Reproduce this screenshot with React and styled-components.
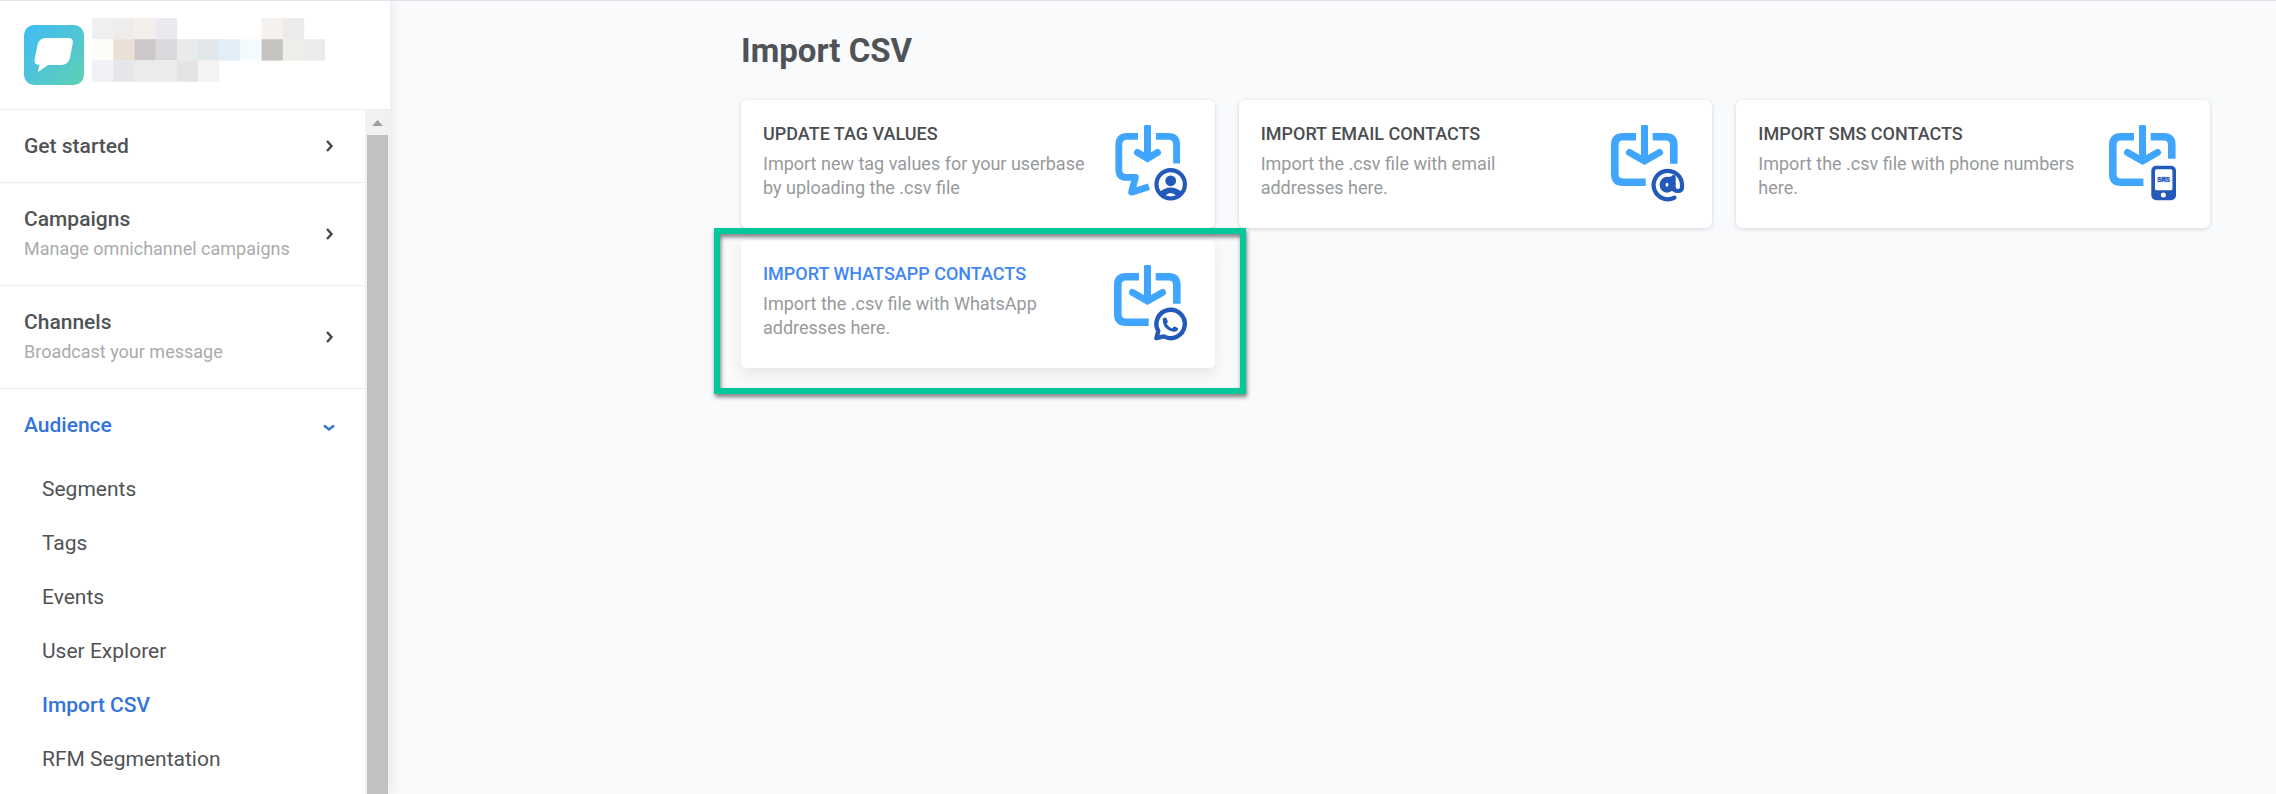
import React from "react"
import styled, { createGlobalStyle, css, ThemeProvider } from "styled-components"

const theme = {
  color: {
    page: "#f8fafc",
    text: "#505356",
    muted: "#a9abad",
    body: "#979a9c",
    active: "#3274db",
    hover: "#4286f5",
    line: "#eceeef",
    icon: "#3fa5ff",
    badge: "#2259ba",
    highlight: "#06c79a"
  }
}

const GlobalStyle = createGlobalStyle`
  *, *::before, *::after {
    box-sizing: border-box;
  }
  body {
    margin: 0;
    background: ${theme.color.page};
    font-family: Roboto, "Liberation Sans", sans-serif;
  }
  a {
    text-decoration: none;
  }
`

const Page = styled.div`
  display: flex;
  height: 100vh;
  overflow: hidden;
  border-top: 1px solid #e0e2e6;
  color: ${props => props.theme.color.text};
`

const Sidebar = styled.aside`
  display: flex;
  flex-direction: column;
  flex: 0 0 390px;
  background: #fff;
  box-shadow: 0 0 10px rgba(60, 70, 90, 0.12);
`

const Brand = styled.header`
  display: flex;
  gap: 8px;
  padding: 17px 24px 24px;
  border-bottom: 1px solid ${props => props.theme.color.line};
`

const Logo = styled.svg`
  width: 60px;
  height: 60px;
  margin-top: 7px;
`

const Mosaic = styled.svg`
  width: 233px;
  height: 64px;
`

const SidebarBody = styled.div`
  display: flex;
  flex: 1;
  min-height: 0;
`

const Nav = styled.nav`
  flex: 1;
  overflow: hidden;
`

const Section = styled.button`
  display: flex;
  align-items: center;
  justify-content: space-between;
  width: 100%;
  padding: 24px 30px 24px 24px;
  border: 0;
  border-bottom: 1px solid
    ${props => (props.$open ? "transparent" : props.theme.color.line)};
  background: none;
  color: ${props => (props.$open ? props.theme.color.active : "inherit")};
  font-family: inherit;
  text-align: left;
  cursor: pointer;
`

const SectionText = styled.span`
  display: flex;
  flex-direction: column;
  gap: 6px;
  line-height: 24px;
`

const SectionTitle = styled.span`
  font-size: 21px;
  font-weight: 500;
`

const SectionNote = styled.span`
  color: ${props => props.theme.color.muted};
  font-size: 18px;
`

const Chevron = styled.svg`
  width: 12px;
  height: 12px;
  fill: none;
  stroke: ${props => (props.$open ? props.theme.color.active : "#45484b")};
  stroke-width: 2.4;
`

const SubList = styled.ul`
  margin: 0;
  padding: 0;
  list-style: none;
`

const SubLink = styled.a`
  display: block;
  padding-left: 42px;
  color: inherit;
  font-size: 21px;
  line-height: 54px;
  ${props =>
    props.$active &&
    css`
      color: ${props.theme.color.active};
      font-weight: 500;
    `};
`

const Scrollbar = styled.div`
  display: flex;
  flex-direction: column;
  flex: 0 0 25px;
  padding: 0 2px;
  background: #f1f1f1;
`

const ScrollArrow = styled.svg`
  width: 21px;
  height: 25px;
  fill: #a0a0a0;
`

const ScrollThumb = styled.div`
  flex: 1;
  background: #c1c1c1;
`

const Main = styled.main`
  flex: 1;
  min-width: 0;
  padding: 26px 66px 48px 351px;
`

const Title = styled.h1`
  margin: 0 0 25px;
  font-size: 33px;
  font-weight: 700;
  line-height: 48px;
`

const Cards = styled.div`
  display: grid;
  grid-template-columns: repeat(3, 1fr);
  gap: 12px 24px;
`

const Card = styled.a`
  position: relative;
  display: flex;
  justify-content: space-between;
  min-height: 128px;
  padding: 22px 26px 22px 22px;
  border-radius: 6px;
  background: #fff;
  box-shadow: ${props =>
    props.$highlighted
      ? "0 6px 14px rgba(60, 60, 60, 0.1)"
      : "0 1px 4px rgba(60, 70, 80, 0.2)"};
  color: inherit;
`

const CardText = styled.div`
  max-width: 322px;
`

const CardTitle = styled.h2`
  margin: 0 0 6px;
  color: ${props => (props.$active ? props.theme.color.hover : "#4b4e51")};
  font-size: 18px;
  font-weight: 500;
  line-height: 24px;
  text-transform: uppercase;
`

const CardNote = styled.p`
  margin: 0;
  color: ${props => props.theme.color.body};
  font-size: 18px;
  line-height: 24px;
`

const CardIcon = styled.svg`
  flex: none;
  width: 75px;
  height: 78px;
  margin-top: 3px;
`

const Highlight = styled.span`
  position: absolute;
  inset: -12px -31px -26px -27px;
  z-index: 1;
  border: 6px solid ${props => props.theme.color.highlight};
  filter: drop-shadow(1px 3px 2px rgba(0, 0, 0, 0.5));
  pointer-events: none;
`

const { icon, badge } = theme.color
const frame = { fill: "none", stroke: icon, strokeWidth: 7.6 }

const Arrow = ({ narrow }) => (
  <g fill="none" stroke={icon} strokeWidth="7" strokeLinecap="round">
    <path d="M33.5 0.5V34" strokeLinecap="butt" />
    <path
      d={
        narrow
          ? "M23.5 27.5L33.5 33.5L43.5 27.5"
          : "M18.5 27.5L33.5 36L48.5 27.5"
      }
    />
    <path d="M32 1.8H35" strokeWidth="3.5" />
  </g>
)

const TagIcon = () => (
  <CardIcon viewBox="0 0 75 78" aria-hidden="true">
    <path
      {...frame}
      strokeWidth="6.8"
      strokeLinejoin="round"
      d="M24 11.4H13Q4.8 11.4 4.8 19.6V44.4Q4.8 52.4 12.6 52.4H21.4L17.6 67.2L35 61.8M42 11.4H54.6Q62.6 11.4 62.6 19.6V38.4"
    />
    <Arrow narrow />
    <circle cx="56.7" cy="59.3" r="14.2" fill="none" stroke={badge} strokeWidth="4.2" />
    <circle cx="56.7" cy="55.8" r="5.4" fill={badge} />
    <path
      d="M45 67.5Q56.7 57.6 68.4 67.5L66 71H62.5Q56.7 65 50.9 71H47.4Z"
      fill={badge}
    />
  </CardIcon>
)

const EmailIcon = () => (
  <CardIcon viewBox="0 0 75 78" aria-hidden="true">
    <path
      {...frame}
      d="M25 11.8H12Q3.8 11.8 3.8 20V49.2Q3.8 57.2 12 57.2H34.7M41.7 11.8H54.6Q62.8 11.8 62.8 20V38.8"
    />
    <Arrow />
    <g fill="none" stroke={badge}>
      <path
        d="M63.5 72.6A14.2 14.2 0 1 1 71 59.5V62.5Q70.8 66 67 66Q62.4 66 62.4 62V52"
        strokeWidth="4.2"
        strokeLinecap="round"
      />
      <ellipse cx="56" cy="59.8" rx="4.4" ry="5" strokeWidth="6" />
      <path d="M61.4 51.5V66" strokeWidth="6" />
    </g>
  </CardIcon>
)

const SmsIcon = () => (
  <CardIcon viewBox="0 0 75 78" aria-hidden="true">
    <path
      {...frame}
      d="M25 11.8H12Q3.8 11.8 3.8 20V49.2Q3.8 57.2 12 57.2H34.4M41.7 11.8H54.6Q62.8 11.8 62.8 20V33.7"
    />
    <Arrow />
    <rect x="42.3" y="40.7" width="24.7" height="34.6" rx="5" fill={badge} />
    <rect x="46" y="44.3" width="17.4" height="21" rx="1.6" fill="#fff" />
    <circle cx="54.4" cy="70" r="2.5" fill="#fff" />
    <text
      x="54.6"
      y="57.4"
      fill={badge}
      stroke={badge}
      strokeWidth="0.4"
      fontFamily="'Liberation Mono', monospace"
      fontSize="7"
      fontWeight="700"
      textAnchor="middle"
    >
      SMS
    </text>
  </CardIcon>
)

const WhatsappIcon = () => (
  <CardIcon viewBox="0 0 75 78" aria-hidden="true">
    <path
      {...frame}
      d="M25 11.8H12Q3.8 11.8 3.8 20V49.2Q3.8 57.2 12 57.2H34.7M41.7 11.8H54.6Q62.8 11.8 62.8 20V38.8"
    />
    <Arrow />
    <path
      d="M42.4 73.2L44.3 66A14.2 14.2 0 1 1 49.8 71.4Z"
      fill="none"
      stroke={badge}
      strokeWidth="4.4"
      strokeLinejoin="round"
    />
    <path
      d="M49 53.5Q50.8 51.5 52.5 53.3L53.8 56.4Q53.6 58 52.5 58.8Q54.8 62.2 58 63.4Q59 62 60.7 61.5L63.8 63Q64.8 64.4 63 65.8Q60 67.6 55.4 65.6Q49.4 62 48.8 56.4Z"
      fill={badge}
    />
  </CardIcon>
)

// [column, row, colour] of each 21px cell
const cells = [
  [0, 0, "#efefef"],
  [1, 0, "#efedec"],
  [2, 0, "#f4efeb"],
  [3, 0, "#e9e9ef"],
  [8, 0, "#f5f1ee"],
  [9, 0, "#ecebe9"],
  [0, 1, "#fefcf8"],
  [1, 1, "#eae0d6"],
  [2, 1, "#cdc8c9"],
  [3, 1, "#d8d8dd"],
  [4, 1, "#e8eaec"],
  [5, 1, "#e1e6e8"],
  [6, 1, "#e2eef7"],
  [7, 1, "#f4fbfc"],
  [8, 1, "#c5c3bf"],
  [9, 1, "#eeedea"],
  [10, 1, "#ebebeb"],
  [0, 2, "#eff1f5"],
  [1, 2, "#e4e6e9"],
  [2, 2, "#ebebeb"],
  [3, 2, "#ececec"],
  [4, 2, "#e5e4e2"],
  [5, 2, "#f3f3f3"]
]

const sections = [
  { title: "Get started" },
  { title: "Campaigns", note: "Manage omnichannel campaigns" },
  { title: "Channels", note: "Broadcast your message" },
  { title: "Audience", open: true }
]

const audience = [
  "Segments",
  "Tags",
  "Events",
  "User Explorer",
  "Import CSV",
  "RFM Segmentation"
]

const imports = [
  {
    title: "Update tag values",
    note: "Import new tag values for your userbase by uploading the .csv file",
    Icon: TagIcon
  },
  {
    title: "Import email contacts",
    note: "Import the .csv file with email addresses here.",
    Icon: EmailIcon
  },
  {
    title: "Import SMS contacts",
    note: "Import the .csv file with phone numbers here.",
    Icon: SmsIcon
  },
  {
    title: "Import WhatsApp contacts",
    note: "Import the .csv file with WhatsApp addresses here.",
    Icon: WhatsappIcon,
    highlighted: true
  }
]

export default () => (
  <ThemeProvider theme={theme}>
    <GlobalStyle />
    <Page>
      <Sidebar>
        <Brand>
          <Logo viewBox="0 0 60 60" aria-hidden="true">
            <defs>
              <linearGradient id="logo" x1="0" y1="0" x2="1" y2="1">
                <stop offset="0.1" stopColor="#42bdf0" />
                <stop offset="1" stopColor="#5fd0b3" />
              </linearGradient>
            </defs>
            <rect width="60" height="60" rx="10" fill="url(#logo)" />
            <path
              d="M21 13H44.5Q49.5 13 48.8 18L46 32.5Q44.5 39.5 38 40H24L14 47L15.3 40Q10 39.5 10.5 35L13.5 20Q15 13.5 21 13Z"
              fill="#fff"
            />
          </Logo>
          <Mosaic viewBox="0 0 233 64" aria-hidden="true">
            {cells.map(([x, y, fill]) => (
              <rect
                key={`${x}-${y}`}
                x={x * 21.2}
                y={y * 21.2}
                width="21.4"
                height="21.4"
                fill={fill}
              />
            ))}
          </Mosaic>
        </Brand>
        <SidebarBody>
          <Nav>
            {sections.map(({ title, note, open }) => (
              <Section key={title} type="button" aria-expanded={!!open} $open={open}>
                <SectionText>
                  <SectionTitle>{title}</SectionTitle>
                  {note && <SectionNote>{note}</SectionNote>}
                </SectionText>
                <Chevron viewBox="0 0 12 12" $open={open} aria-hidden="true">
                  <path d={open ? "M1 6.5L6 10.5L11 6.5" : "M4 1L8.5 6L4 11"} />
                </Chevron>
              </Section>
            ))}
            <SubList>
              {audience.map(label => (
                <li key={label}>
                  <SubLink href="#" $active={label === "Import CSV"}>
                    {label}
                  </SubLink>
                </li>
              ))}
            </SubList>
          </Nav>
          <Scrollbar aria-hidden="true">
            <ScrollArrow viewBox="0 0 21 25">
              <path d="M5 16L10.5 10L16 16Z" />
            </ScrollArrow>
            <ScrollThumb />
          </Scrollbar>
        </SidebarBody>
      </Sidebar>
      <Main>
        <Title>Import CSV</Title>
        <Cards>
          {imports.map(({ title, note, Icon, highlighted }) => (
            <Card key={title} href="#" $highlighted={highlighted}>
              <CardText>
                <CardTitle $active={highlighted}>{title}</CardTitle>
                <CardNote>{note}</CardNote>
              </CardText>
              <Icon />
              {highlighted && <Highlight />}
            </Card>
          ))}
        </Cards>
      </Main>
    </Page>
  </ThemeProvider>
)
